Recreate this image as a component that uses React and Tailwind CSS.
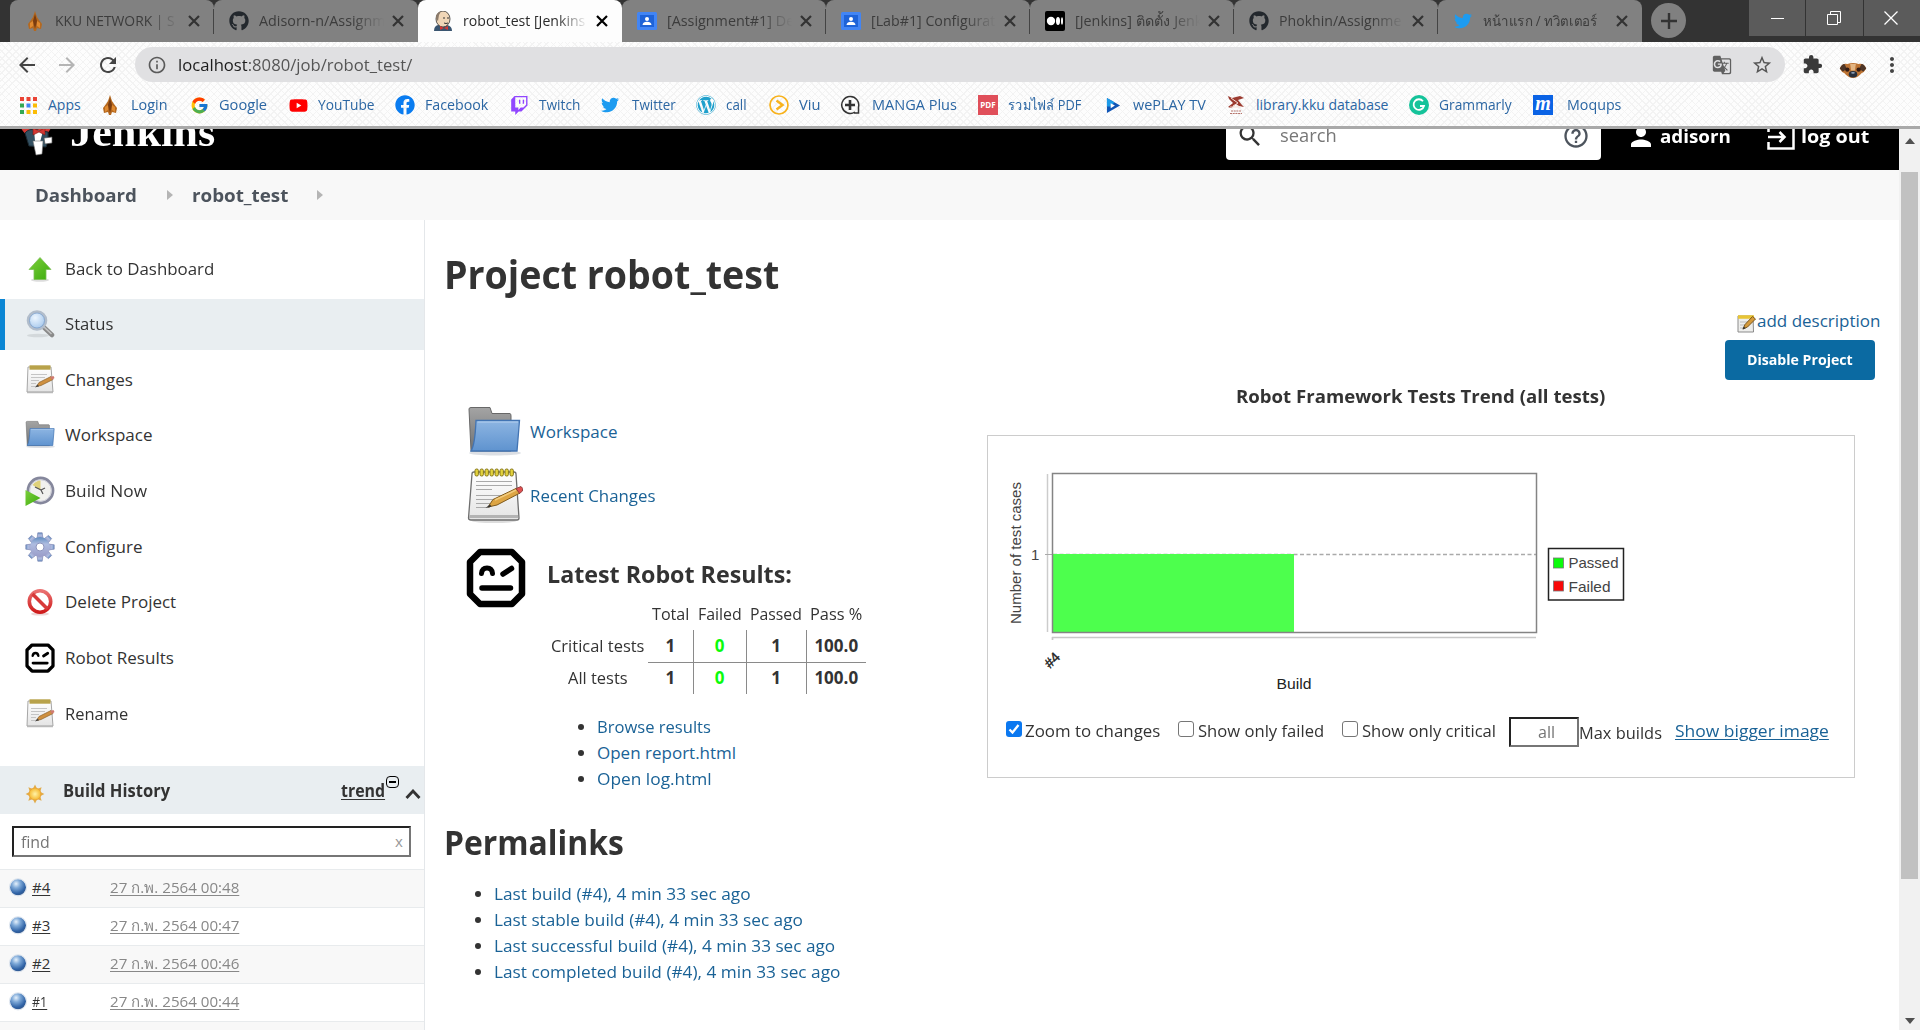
import { useLayoutEffect, useRef, useState } from 'react';
import { FaGithub, FaTwitter, FaWordpress, FaFacebook, FaYoutube } from 'react-icons/fa';
import { FcGoogle } from 'react-icons/fc';
import { BsTwitch } from 'react-icons/bs';
import {
  MdArrowBack, MdArrowForward, MdRefresh, MdInfoOutline, MdGTranslate, MdStarBorder,
  MdExtension, MdMoreVert, MdPerson, MdSearch, MdHelpOutline,
} from 'react-icons/md';

/* Single line of text condensed or widened to a given width. */
function T({ w, className = '', underline = false, children }) {
  const ref = useRef(null);
  const [scale, setScale] = useState(1);
  useLayoutEffect(() => {
    const natural = ref.current.offsetWidth;
    if (natural) setScale(w / natural);
  }, [w]);
  return (
    <span className={`inline-block shrink-0 whitespace-nowrap ${className}`} style={{ width: w }}>
      <span
        ref={ref}
        className={`inline-block origin-left ${underline ? 'underline decoration-1 underline-offset-2' : ''}`}
        style={{ transform: `scaleX(${scale})` }}
      >
        {children}
      </span>
    </span>
  );
}

/* ---------- icons ---------- */

const Flame = () => (
  <svg viewBox="0 0 20 20" className="size-5">
    <path d="M10 0 L12 6 L14 9 L17 13 L16 18 L12 17 L11 20 H9 L8 17 L4 18 L3 13 L6 9 L8 6Z" fill="#b5691f" />
    <path d="M10 3 L12 10 L10 18 L8 10Z" fill="#7a3c10" />
    <path d="M5 12 L8 10 L8 15 L5 17Z M15 12 L12 10 L12 15 L15 17Z" fill="#e08a30" />
  </svg>
);

const Butler = () => (
  <svg viewBox="0 0 20 20" className="size-5">
    <path d="M1 20 Q1 15 5 14 L14 14 Q19 15 19 20Z" fill="#3a5570" />
    <ellipse cx="10" cy="8" rx="7" ry="8" fill="#f0d6b7" stroke="#333" strokeWidth=".8" />
    <path d="M3 8 Q2 2 8 .5 L6 4 L5 10Z" fill="#8a7a6a" />
    <path d="M10 7h2M14 7h2M11 12q2 1 4 0" stroke="#333" fill="none" />
    <path d="M7 15 L11 17 L15 15 V19 L11 17 L7 19Z" fill="#d33833" />
  </svg>
);

const Classroom = () => (
  <svg viewBox="0 0 20 20" className="size-5">
    <rect y="1" width="20" height="18" rx="1.5" fill="#4285f4" />
    <rect x="3" y="4" width="14" height="12" fill="#1e63d8" />
    <circle cx="10" cy="8" r="2" fill="#fff" />
    <path d="M5.5 14 Q6 10.800 10 10.800 T14.500 14Z" fill="#fff" />
  </svg>
);

const MediumMark = () => (
  <svg viewBox="0 0 20 20" className="size-5">
    <rect width="20" height="20" rx="2" fill="#000" />
    <circle cx="6" cy="10" r="4.200" fill="#fff" />
    <ellipse cx="13" cy="10" rx="2" ry="4" fill="#fff" />
    <ellipse cx="17" cy="10" rx="1" ry="3.800" fill="#fff" />
  </svg>
);

const AppsGrid = () => (
  <svg viewBox="0 0 17 17" className="size-[17px]">
    {['#ea4335', '#ea4335', '#ea4335', '#34a853', '#4285f4', '#fbbc05', '#34a853', '#fbbc05', '#fbbc05'].map((c, i) => (
      <rect key={i} x={(i % 3) * 6.5} y={Math.floor(i / 3) * 6.5} width="4" height="4" fill={c} />
    ))}
  </svg>
);

const Viu = () => (
  <svg viewBox="0 0 20 20" className="size-5" fill="none" stroke="#f8b21c">
    <circle cx="10" cy="10" r="9" strokeWidth="1.700" />
    <path d="M7.500 5.500 L13.500 10 L7.500 14.500" strokeWidth="2.500" />
  </svg>
);

const Manga = () => (
  <svg viewBox="0 0 20 20" className="size-5" fill="none" stroke="#333">
    <path d="M15 17 A8.500 8.500 0 1 1 18.500 12 V18 H14" strokeWidth="1.500" />
    <path d="M10 5v10M5 10h10" strokeWidth="2.600" />
  </svg>
);

const WePlay = () => (
  <svg viewBox="0 0 16 16" className="size-[15px]">
    <path d="M1 0 L15 8 L1 16Z" fill="#1055b5" />
    <path d="M1 0 L9 4.600 L5 9 L1 9Z" fill="#1c9be8" />
    <path d="M5 5.500 L9.500 8 L5 10.800Z" fill="#fff" />
  </svg>
);

const Library = () => (
  <svg viewBox="0 0 18 20" className="h-5 w-[18px]">
    <path d="M1 1 L5 3 L13 1 L17 3 L11 5 L15 10 L17 12 L12 11 L9 9 L4 13 L1 12 L6 8 L2 4Z" fill="#9c3b30" />
    <path d="M4 3 L11 8 L6 11 M3 12 H14" stroke="#f3ddd5" fill="none" />
    <path d="M4 16h10M3 18.500h12" stroke="#b5736a" strokeDasharray="2 .7" />
  </svg>
);

const Grammarly = () => (
  <svg viewBox="0 0 20 20" className="size-5" fill="none" stroke="#fff">
    <circle cx="10" cy="10" r="10" fill="#15c39a" stroke="none" />
    <path d="M14 6.200 A5.300 5.300 0 1 0 15 11 H11" strokeWidth="1.800" />
  </svg>
);

const Dog = () => (
  <svg viewBox="0 0 28 18" className="h-[17px] w-7">
    <path d="M0 7 Q2 1 8 2 Q14 0 20 2 Q26 1 28 7 Q26 11 23 12 Q19 17 14 17 Q9 17 5 12 Q2 11 0 7Z" fill="#bd7434" />
    <path d="M0 7 Q2 2 5 2 L7 6 Q5 10 3 10Z M28 7 Q26 2 23 2 L21 6 Q23 10 25 10Z" fill="#4d3527" />
    <circle cx="8" cy="8" r="2.300" fill="#341c14" />
    <circle cx="20" cy="8" r="2.300" fill="#341c14" />
    <path d="M11 2 H17 L16 9 H12Z" fill="#e3b583" />
    <ellipse cx="14" cy="13" rx="4.500" ry="3.500" fill="#29303c" />
    <ellipse cx="14" cy="11.500" rx="2" ry="1" fill="#8fa4bd" />
  </svg>
);

const JenkinsLogo = () => (
  <svg viewBox="0 0 36 56" className="h-14 w-9 shrink-0">
    <circle cx="17" cy="20" r="16.500" fill="#d33833" />
    <ellipse cx="18" cy="16" rx="10.500" ry="12" fill="#f0d6b7" stroke="#2b2b2b" />
    <path d="M14 23 q4 2 8 -1" stroke="#333" strokeWidth="1.300" fill="none" />
    <path d="M6 32 Q10 27 17 29 L29 31 Q30 40 27 46 L10 45Z" fill="#335061" stroke="#1b2a33" />
    <path d="M15 29 L24 30 L20 45 L16 40Z" fill="#fff" />
    <path d="M14 27 L20 30 L26 27 V34 L20 31 L14 34Z" fill="#d33833" stroke="#7c1512" strokeWidth=".6" />
    <path d="M14 40 L24 40 L23 53 L17 54Z" fill="#fff" stroke="#777" strokeWidth=".6" />
    <path d="M25 37 L33 36 V42 L26 43Z" fill="#fff" stroke="#555" strokeWidth=".7" />
  </svg>
);

const Defs = () => (
  <svg className="absolute size-0">
    <defs>
      <linearGradient id="green" x1="0" y1="0" x2="1" y2="1"><stop stopColor="#7ccf3c" /><stop offset="1" stopColor="#3cab0c" /></linearGradient>
      <linearGradient id="blue" x1="0" y1="0" x2="0" y2="1"><stop stopColor="#8db5e2" /><stop offset="1" stopColor="#5f93cf" /></linearGradient>
      <linearGradient id="grey" x1="0" y1="0" x2="0" y2="1"><stop stopColor="#a4a4a4" /><stop offset="1" stopColor="#6f7173" /></linearGradient>
      <linearGradient id="paper" x1="0" y1="0" x2="0" y2="1"><stop stopColor="#ffffff" /><stop offset="1" stopColor="#e4e4e4" /></linearGradient>
      <linearGradient id="red" x1="0" y1="0" x2="0" y2="1"><stop stopColor="#ea7272" /><stop offset="1" stopColor="#cf1b1b" /></linearGradient>
      <linearGradient id="gear" x1="0" y1="0" x2="0" y2="1"><stop stopColor="#5f8cbf" /><stop offset=".35" stopColor="#aebce0" /><stop offset="1" stopColor="#9a9cc8" /></linearGradient>
      <radialGradient id="orb" cx=".38" cy=".28" r=".75"><stop stopColor="#e4f0fb" /><stop offset=".35" stopColor="#7ea9d8" /><stop offset=".8" stopColor="#2f62a5" /><stop offset="1" stopColor="#31578c" /></radialGradient>
      <radialGradient id="glass" cx=".4" cy=".35" r=".7"><stop stopColor="#edf6ff" /><stop offset="1" stopColor="#9fc3ea" /></radialGradient>
      <radialGradient id="sun"><stop stopColor="#fff3a8" /><stop offset="1" stopColor="#f5b82e" /></radialGradient>
    </defs>
  </svg>
);

const UpArrow = () => (
  <svg viewBox="0 0 30 30" className="size-[30px]">
    <ellipse cx="15" cy="26" rx="9" ry="1.800" fill="#ddd" />
    <path d="M15 3.500 L26 15.500 H21 V25.500 H9 V15.500 H4Z" fill="url(#green)" stroke="#7bbf55" strokeWidth=".8" />
  </svg>
);
const Magnifier = () => (
  <svg viewBox="0 0 30 30" className="size-[30px]">
    <ellipse cx="13" cy="26.500" rx="11" ry="1.800" fill="#d3d8db" />
    <path d="M18.500 18 L27 26" stroke="#8a8a8a" strokeWidth="4.500" strokeLinecap="round" />
    <path d="M18.500 17.500 L26.500 25" stroke="#c4c4c4" strokeWidth="1.600" />
    <circle cx="12" cy="11.500" r="9" fill="url(#glass)" stroke="#b2bdcb" strokeWidth="2.600" />
    <circle cx="12" cy="11.500" r="7.500" fill="none" stroke="#7397c4" strokeWidth=".7" />
  </svg>
);
const NotepadSmall = ({ className = 'size-[30px]' }) => (
  <svg viewBox="0 0 30 30" className={className}>
    <path d="M3 2 H26 L28 27 H2Z" fill="url(#paper)" stroke="#9c9c9c" strokeWidth=".9" />
    <path d="M2 27.500h26" stroke="#b9b9b9" strokeWidth="1.500" />
    <path d="M4.500 2.500H25.500" stroke="#b8a24a" strokeWidth="4.400" />
    <path d="M6 9.500h16M6 12.500h14M6 15.500h8M6 18.500h5M6 21.500h8" stroke="#c4c4c4" strokeWidth="1" />
    <path d="M11.500 21.500 L14 17.500 L26 11.500 L28 14.500 L16 20.500Z" fill="#cf9040" stroke="#8b6028" strokeWidth=".7" />
    <path d="M25 12 L28.500 11 L29.500 13 L27 15Z" fill="#cf7a70" />
    <path d="M10 22.500 L12.500 19.500 L14 21.200Z" fill="#444" />
  </svg>
);
const NotepadTiny = () => (
  <svg viewBox="0 0 19 19" className="mt-1 size-[19px]">
    <path d="M1 2 H16 L16.500 18 H1Z" fill="#eeeeec" stroke="#8b8b8b" />
    <path d="M1 3H17" stroke="#e8c535" strokeWidth="3.500" />
    <path d="M3 8h9M3 11h6M3 14h4" stroke="#bbb" />
    <path d="M6 15 L8 10.500 L15.500 2.500 L18.500 5 L10.500 13Z" fill="#d59a3c" stroke="#6f4d14" strokeWidth=".9" />
    <path d="M5.500 15.500 L6.800 12.500 L8.700 14.300Z" fill="#333" />
  </svg>
);
const Folder = ({ className = 'size-[30px]' }) => (
  <svg viewBox="0 0 54 54" className={className}>
    <ellipse cx="28" cy="48" rx="26" ry="2.500" fill="#dcdfe4" />
    <path d="M2 4 Q2 2.500 4 2.500 H23 L25 8.500 H43 Q44 8.500 44 11 V46 H4Z" fill="url(#grey)" stroke="#686868" />
    <path d="M9 15.500 H52.500 L50 46 H4 Q8 40 9 15.500Z" fill="url(#blue)" stroke="#4274b3" strokeWidth="1.300" />
    <path d="M10.500 17 H51" stroke="#b5d0ef" />
  </svg>
);
const Clock = () => (
  <svg viewBox="0 0 30 30" className="size-[30px]">
    <circle cx="15.500" cy="14.500" r="12.500" fill="#f1f1ee" stroke="#85879c" strokeWidth="2.800" />
    <circle cx="15.500" cy="14.500" r="10.800" fill="none" stroke="#c9cad6" />
    <path d="M15.500 14 L7.500 9 Q11 4.500 15.500 4.500Z" fill="#dfd17a" />
    <path d="M10 11 L16 14 L18 18 M16 14 L20 12" stroke="#555" strokeWidth="1.200" fill="none" />
    <path d="M.5 14 L15.500 22 L.5 30Z" fill="url(#green)" />
  </svg>
);
const Gear = () => (
  <svg viewBox="0 0 30 30" className="size-[30px]">
    <g fill="url(#gear)" stroke="#8088b5" strokeWidth=".7">
      {[0, 45, 90, 135, 180, 225, 270, 315].map((a) => (
        <path key={a} d="M12 7 L12.800 .8 H17.200 L18 7Z" transform={`rotate(${a} 15 15)`} />
      ))}
    </g>
    <circle cx="15" cy="15" r="10" fill="url(#gear)" />
    <circle cx="15" cy="15" r="4" fill="#fff" stroke="#8d94bd" />
  </svg>
);
const NoEntry = () => (
  <svg viewBox="0 0 30 30" className="size-[30px]">
    <ellipse cx="15" cy="27" rx="9" ry="1.600" fill="#ecd6d6" />
    <circle cx="15" cy="14.500" r="10.700" fill="#fff" stroke="url(#red)" strokeWidth="3.600" />
    <path d="M7.500 7 L22.500 22" stroke="#d83a3a" strokeWidth="3.600" />
  </svg>
);
const Robot = ({ className = 'size-[30px]' }) => (
  <svg viewBox="0 0 60 60" className={className} fill="none" stroke="#000" strokeLinecap="round">
    <path d="M14 4 H46 L56 14 V46 L46 56 H14 L4 46 V14Z" strokeWidth="6.500" strokeLinejoin="round" />
    <path d="M15.500 25.500 Q16 20 21 20 Q26 20 26.500 25.500" strokeWidth="5" />
    <path d="M37 26 L45.500 20.500M16 40 H44.500" strokeWidth="5.500" />
  </svg>
);
const Notepad = () => (
  <svg viewBox="0 0 56 56" className="size-14">
    <ellipse cx="27" cy="53" rx="22" ry="2" fill="#ddd" />
    <path d="M5 6 Q5 4 7 4 H47 Q49 4 49 6 L52 50 Q52 52 50 52 H4 Q1.500 52 1.500 50Z" fill="url(#paper)" stroke="#6e6e6e" strokeWidth="1.300" />
    <path d="M2 48.500H51" stroke="#b3b3b3" strokeWidth="3" />
    {[9, 14, 19, 24, 29, 34, 39, 44].map((x) => (
      <rect key={x} x={x - 1} y="1" width="3.400" height="7" rx="1.500" fill="#e3d23c" stroke="#86781b" />
    ))}
    <path d="M9 13.500h36M9 17.500h36M9 21.500h16M9 27.500h30M9 31.500h20M9 35.500h14M9 39.500h14" stroke="#a9a9a9" />
    <path d="M21 39 L26 31.500 L49 20.500 L53 25 L30 37Z" fill="#dda544" stroke="#7f5a1c" />
    <path d="M28 32 L49 22" stroke="#f2cb7c" strokeWidth="1.500" />
    <path d="M49 20.500 L54 18.500 Q56.500 20 55.500 23 L52.500 25.500Z" fill="#e05050" stroke="#7d3434" strokeWidth=".8" />
    <path d="M18.500 40 L23 36.500 L24.500 38.500Z" fill="#333" />
  </svg>
);
const Sun = () => (
  <svg viewBox="0 0 20 20" className="size-5">
    {[0, 45, 90, 135, 180, 225, 270, 315].map((a) => (
      <path key={a} d="M7.800 5 L10 .6 L12.200 5Z" fill="#e0ab4a" transform={`rotate(${a} 10 10)`} />
    ))}
    <circle cx="10" cy="10" r="6" fill="url(#sun)" stroke="#e8a13a" strokeWidth=".8" />
  </svg>
);
const Orb = () => (
  <svg viewBox="0 0 20 20" className="size-5">
    <circle cx="10" cy="10.300" r="8" fill="url(#orb)" />
    <circle cx="10" cy="10.300" r="8.600" fill="none" stroke="#c5d2e2" strokeWidth=".6" />
  </svg>
);

/* ---------- browser chrome ---------- */

const TABS = [
  { icon: <Flame />, text: 'KKU NETWORK | S', w: 120 },
  { icon: <FaGithub className="size-5 text-[#23282d]" />, text: 'Adisorn-n/Assignm', w: 126 },
  { icon: <Butler />, text: 'robot_test [Jenkins', w: 122, active: true },
  { icon: <Classroom />, text: '[Assignment#1] De', w: 127 },
  { icon: <Classroom />, text: '[Lab#1] Configurat', w: 124 },
  { icon: <MediumMark />, text: '[Jenkins] ติดตั้ง Jenk', w: 127 },
  { icon: <FaGithub className="size-5 text-[#23282d]" />, text: 'Phokhin/Assignme', w: 122 },
  { icon: <FaTwitter className="size-[18px] text-[#1d9bf0]" />, text: 'หน้าแรก / ทวิตเตอร์', w: 114, full: true },
];

const Cross = ({ className }) => (
  <svg viewBox="0 0 12 12" className={`size-3 shrink-0 ${className}`} stroke="currentColor" strokeWidth="2.200">
    <path d="M1 1 L11 11 M11 1 L1 11" />
  </svg>
);

function Tab({ tab, divider }) {
  const tone = tab.active
    ? 'bg-[#fdfdfd] text-[#2b2b2b]'
    : 'bg-[#818181] text-[#3c3c3c]';
  return (
    <div className={`flex h-[42px] w-[204px] shrink-0 items-center rounded-t-lg ${tone}`}>
      <div className="ml-[15px] flex w-5 justify-center">{tab.icon}</div>
      <div className={`ml-2.5 w-[130px] text-[14px] ${tab.full ? '' : 'mask-r-from-72% mask-r-to-96%'}`}>
        <T w={tab.w}>{tab.text}</T>
      </div>
      <Cross className={`ml-[3px] ${tab.active ? 'text-black' : 'text-[#333]'}`} />
      <div className={`ml-auto h-[25px] w-px ${divider ? 'bg-[#444]' : ''}`} />
    </div>
  );
}

function TabStrip() {
  return (
    <div className="flex h-[42px] bg-[#333]">
      <div className="flex w-[10px] shrink-0" />
      {TABS.map((t, i) => (
        <Tab key={i} tab={t} divider={i !== 1 && i !== 2 && i !== 7} />
      ))}
      <div className="mt-[3px] ml-[9px] flex size-[35px] shrink-0 items-center justify-center rounded-full bg-[#808080]">
        <svg viewBox="0 0 16 16" className="size-4" stroke="#333" strokeWidth="2.400"><path d="M8 0V16M0 8H16" /></svg>
      </div>
      <div className="ml-auto flex h-9 w-[171px] gap-px">
        <div className="flex w-14 items-center justify-center bg-[#5b5b5b]"><div className="h-px w-[13px] bg-white" /></div>
        <div className="flex w-[57px] items-center justify-center bg-[#5b5b5b] pr-0.5">
          <svg viewBox="0 0 14 14" className="size-3.5" fill="none" stroke="#fff"><path d="M.5 3.500H10.500V13.500H.5Z M3.500 3V.5H13.500V11.500H11" /></svg>
        </div>
        <div className="flex w-14 items-center justify-center bg-[#5b5b5b] pr-0.5">
          <svg viewBox="0 0 14 14" className="size-3.5" stroke="#fff" strokeWidth="1.300"><path d="M.5 .5L13.500 13.500M13.500 .5L.5 13.500" /></svg>
        </div>
      </div>
    </div>
  );
}

function AddressBar() {
  return (
    <div className="flex h-[45px] items-center text-[#444]">
      <div className="flex w-[135px] shrink-0 items-center">
        <MdArrowBack className="ml-[15px] size-6" />
        <MdArrowForward className="ml-4 size-6 text-[#b5b5b5]" />
        <MdRefresh className="ml-[17px] size-6" />
      </div>
      <div className="flex h-[35px] w-[1650px] shrink-0 items-center rounded-full bg-[#e0e0e2]">
        <MdInfoOutline className="ml-3 size-5 text-[#5a5a5a]" />
        <T w={234} className="ml-[11px] text-[17px] text-[#555]"><span className="text-[#1c1c1c]">localhost</span>:8080/job/robot_test/</T>
        <MdGTranslate className="ml-auto size-5 text-[#606060]" />
        <MdStarBorder className="mr-3 ml-[19px] size-[22px] text-[#555]" />
      </div>
      <MdExtension className="ml-[17px] size-[21px] shrink-0 text-[#3a3a3a]" />
      <div className="mt-3 ml-4 w-7 shrink-0"><Dog /></div>
      <MdMoreVert className="ml-[13px] size-6 shrink-0" />
    </div>
  );
}

/* slot: distance from this bookmark's icon box to the next; gap: space between icon box and label */
const BOOKMARKS = [
  { slot: 'w-[82px]', icon: <AppsGrid />, text: 'Apps', w: 33 },
  { slot: 'w-[89px]', icon: <Flame />, text: 'Login', w: 36, gap: 'ml-[11px]' },
  { slot: 'w-[99px]', icon: <FcGoogle className="size-[19px]" />, text: 'Google', w: 48 },
  { slot: 'w-[107px]', icon: <FaYoutube className="size-[19px] text-[#f00]" />, text: 'YouTube', w: 57 },
  { slot: 'w-[114px]', icon: <FaFacebook className="size-5 text-[#0a7cf0]" />, text: 'Facebook', w: 63 },
  { slot: 'w-[91px]', icon: <BsTwitch className="size-[19px] text-[#9146ff]" />, text: 'Twitch', w: 41 },
  { slot: 'w-[96px]', icon: <FaTwitter className="size-[18px] text-[#1d9bf0]" />, text: 'Twitter', w: 44, gap: 'ml-[12px]' },
  { slot: 'w-[73px]', icon: <FaWordpress className="size-5 text-[#1fa0cc]" />, text: 'call', w: 21 },
  { slot: 'w-[71px]', icon: <Viu />, text: 'Viu', w: 21 },
  { slot: 'w-[138px]', icon: <Manga />, text: 'MANGA Plus', w: 85, gap: 'ml-[12px]' },
  {
    slot: 'w-[125px]',
    icon: <span className="flex size-5 items-center justify-center bg-[#e04f5a] text-[8px] font-bold text-white">PDF</span>,
    text: 'รวมไฟล์ PDF', w: 73,
  },
  { slot: 'w-[123px]', icon: <WePlay />, text: 'wePLAY TV', w: 73 },
  { slot: 'w-[183px]', icon: <Library />, text: 'library.kku database', w: 132 },
  { slot: 'w-[124px]', icon: <Grammarly />, text: 'Grammarly', w: 73 },
  {
    slot: 'w-[90px]',
    icon: <span className="flex size-5 items-center justify-center bg-[#0b63e5] pb-1 font-['Liberation_Serif',serif] text-[20px] leading-none font-bold text-white italic">m</span>,
    text: 'Moqups', w: 54, gap: 'ml-[14px]',
  },
];

function BookmarkBar() {
  return (
    <div className="flex h-[41px] items-center border-b-2 border-[#a9a9a9] pb-[3px] pl-[18px] text-[14px] text-[#2b66a3]">
      {BOOKMARKS.map((b) => (
        <div key={b.text} className={`flex shrink-0 items-center ${b.slot}`}>
          <div className="flex w-5 shrink-0 justify-center">{b.icon}</div>
          <T w={b.w} className={b.gap || 'ml-2.5'}>{b.text}</T>
        </div>
      ))}
    </div>
  );
}

/* ---------- page ---------- */

function Header() {
  return (
    <header className="flex h-[41px] shrink-0 items-end overflow-hidden bg-black">
      <div className="-mt-7 flex h-14 items-start self-start pl-[19px]">
        <div><JenkinsLogo /></div>
        <T w={145} className="ml-[15px] font-['Liberation_Serif',serif] text-[40px] leading-[64px] font-bold text-white">Jenkins</T>
      </div>
      <div className="mb-2.5 ml-auto flex h-[50px] w-[375px] items-center rounded-[4px] bg-white pt-[2px] text-[#777]">
        <MdSearch className="ml-2.5 size-7 text-[#333]" />
        <T w={57} className="ml-4 text-[18px]">search</T>
        <MdHelpOutline className="mr-[11px] ml-auto size-7 text-[#4d545d]" />
      </div>
      <div className="mb-[13px] flex h-10 w-[298px] items-center text-[18px] font-bold text-white">
        <MdPerson className="ml-[25px] size-[30px]" />
        <T w={71} className="ml-[4px]">adisorn</T>
        <svg viewBox="0 0 28 26" className="ml-[36px] h-[26px] w-7" fill="none" stroke="#fff" strokeWidth="2.500">
          <path d="M1.500 8V1.500H26.500V24.500H1.500V18M1 13H17M12.500 8L17.500 13L12.500 18" />
        </svg>
        <T w={68} className="ml-[6px]">log out</T>
      </div>
    </header>
  );
}

const Chevron = () => (
  <svg viewBox="0 0 6 10" className="h-2.5 w-1.5 -translate-y-px"><path d="M0 0L6 5L0 10Z" fill="#b5b5b5" /></svg>
);

function Breadcrumbs() {
  return (
    <nav className="flex h-[50px] shrink-0 items-center bg-[#f8f8f8] pt-[2px] pl-[35px] text-[18px] font-bold text-[#4d545d]">
      <T w={102} className="mr-[30px]">Dashboard</T>
      <Chevron />
      <T w={96} className="mr-[29px] ml-[19px]">robot_test</T>
      <Chevron />
    </nav>
  );
}

const TASKS = [
  { icon: <UpArrow />, text: 'Back to Dashboard', w: 149 },
  { icon: <Magnifier />, text: 'Status', w: 48, active: true },
  { icon: <NotepadSmall />, text: 'Changes', w: 68 },
  { icon: <Folder />, text: 'Workspace', w: 87 },
  { icon: <Clock />, text: 'Build Now', w: 82 },
  { icon: <Gear />, text: 'Configure', w: 78 },
  { icon: <NoEntry />, text: 'Delete Project', w: 111 },
  { icon: <Robot />, text: 'Robot Results', w: 109 },
  { icon: <NotepadSmall />, text: 'Rename', w: 63 },
];

const BUILDS = [
  ['#4', '27 ก.พ. 2564 00:48'],
  ['#3', '27 ก.พ. 2564 00:47'],
  ['#2', '27 ก.พ. 2564 00:46'],
  ['#1', '27 ก.พ. 2564 00:44'],
];

function Sidebar() {
  return (
    <aside className="flex w-[425px] shrink-0 flex-col border-r border-[#e4e7ea] pt-[23px]">
      <div className="flex h-[496px] flex-col justify-between">
        {TASKS.map((t) => (
          <div
            key={t.text}
            className={`flex h-[51px] items-center border-l-[5px] pl-5 ${t.active ? 'border-[#0b86d4] bg-[#e9eef1]' : 'border-transparent'}`}
          >
            {t.icon}
            <T w={t.w} className="ml-2.5 text-[17px] font-medium">{t.text}</T>
          </div>
        ))}
      </div>
      <div className="mt-[27px] flex h-12 shrink-0 items-center bg-[#e9eef1] pt-px font-bold">
        <div className="mt-1.5 ml-[25px]"><Sun /></div>
        <T w={107} className="ml-[18px] text-[17px]">Build History</T>
        <T w={44} underline className="ml-[171px] text-[17px]">trend</T>
        <div className="mb-[18px] ml-px flex h-3 w-[13px] items-center justify-center rounded-sm border-[1.500px] border-black">
          <div className="h-0.5 w-[7px] bg-black" />
        </div>
        <svg viewBox="0 0 16 10" className="mt-1.5 ml-[6px] h-2.5 w-4" fill="none" stroke="#333" strokeWidth="2.800"><path d="M1.500 9L8 2L14.500 9" /></svg>
      </div>
      <div className="mt-3 ml-3 flex h-[31px] w-[399px] shrink-0 items-center justify-between border-2 border-t-[#222] border-r-[#767676] border-b-[#767676] border-l-[#222] pr-[6px] pl-[7px] text-[#757575]">
        <T w={29} className="text-[17px]">find</T>
        <T w={8} className="text-[15px] text-[#999]">x</T>
      </div>
      <div className="mt-3">
        {BUILDS.map(([n, date]) => (
          <div key={n} className="flex h-[38px] items-center border-t border-[#e8ebed] pb-[3px] pl-2 text-[15px] odd:bg-[#f8f8f8]">
            <Orb />
            <T w={n === '#1' ? 15 : 18} underline className="ml-1">{n}</T>
            <span className={n === '#1' ? 'w-[63px]' : 'w-[60px]'} />
            <T w={129} underline className="text-[#888]">{date}</T>
          </div>
        ))}
        <div className="h-[9px] border-t border-[#e8ebed] bg-[#f8f8f8]" />
      </div>
    </aside>
  );
}

const LINK = 'font-medium text-[#1a6296]';

function Bullets({ items }) {
  return items.map(([text, w]) => (
    <li key={text} className="flex h-[26px] items-center">
      <span className="mr-[13px] size-1.5 rounded-full bg-[#333]" />
      <T w={w} className={LINK}>{text}</T>
    </li>
  ));
}

function Results() {
  const cell = 'border-[#8a8a8a] text-center align-middle';
  return (
    <div className="flex">
      <div className="mt-[1px] ml-[41px]"><Robot className="size-[60px]" /></div>
      <div className="ml-[21px] pt-[7px]">
        <T w={245} className="text-[24px] leading-10 font-bold">Latest Robot Results:</T>
        <table className="mt-[4px] table-fixed border-collapse text-[17px]">
          <colgroup>
            <col className="w-[101px]" /><col className="w-[45px]" /><col className="w-[53px]" /><col className="w-[60px]" /><col className="w-[60px]" />
          </colgroup>
          <tbody>
            <tr className="h-8">
              <td />
              <td className={cell}><T w={37}>Total</T></td>
              <td className={cell}><T w={44}>Failed</T></td>
              <td className={cell}><T w={52}>Passed</T></td>
              <td className={cell}><T w={52}>Pass %</T></td>
            </tr>
            {[['Critical tests', 93], ['All tests', 60]].map(([name, w], i) => {
              const line = i === 0 ? 'border-b' : '';
              return (
                <tr key={name} className="h-8">
                  <td className="text-center"><T w={w}>{name}</T></td>
                  <td className={`${cell} ${line} border-r font-bold`}>1</td>
                  <td className={`${cell} ${line} border-r font-bold text-[#0bfb0b]`}>0</td>
                  <td className={`${cell} ${line} border-r font-bold`}>1</td>
                  <td className={`${cell} ${line} font-bold`}><T w={44}>100.0</T></td>
                </tr>
              );
            })}
          </tbody>
        </table>
        <ul className="mt-5 pl-[31px] text-[17px]">
          <Bullets items={[['Browse results', 114], ['Open report.html', 139], ['Open log.html', 115]]} />
        </ul>
      </div>
    </div>
  );
}

function TrendChart() {
  return (
    <svg viewBox="0 0 620 250" className="h-[250px] w-[620px] font-['Liberation_Sans',sans-serif] text-[15px]" fill="#444">
      <path d="M41.500 18V176" stroke="#ccc" strokeWidth="1.500" />
      <path d="M39 98.500H46" stroke="#aaa" />
      <path d="M47 98.500H530" stroke="#aaa" strokeDasharray="4 2.500" strokeWidth="1.300" />
      <rect x="47" y="98" width="241" height="78" fill="#4dff4d" />
      <rect x="46.500" y="17.500" width="484" height="159" fill="none" stroke="#848484" strokeWidth="1.500" />
      <path d="M46 181.500H530M46.500 181V184" stroke="#c8c8c8" strokeWidth="1.700" fill="none" />
      <text transform="translate(14.500 97) rotate(-90)" textAnchor="middle" textLength="142" lengthAdjust="spacingAndGlyphs">Number of test cases</text>
      <text x="25" y="104">1</text>
      <text transform="translate(46 211) rotate(-45)" fill="#222" x="-3" y="0" fontSize="14" strokeWidth=".4" stroke="#222">#4</text>
      <text x="288" y="233" textAnchor="middle" fill="#222" textLength="35" lengthAdjust="spacingAndGlyphs">Build</text>
      <rect x="542.500" y="92.500" width="75" height="51.500" fill="#fff" stroke="#222" strokeWidth="1.500" />
      <rect x="547.500" y="102" width="10" height="10" fill="#0bfb0b" stroke="#777" strokeWidth=".8" />
      <rect x="547.500" y="125" width="10" height="10" fill="#f80808" stroke="#777" strokeWidth=".8" />
      <text x="562.500" y="112" textLength="50" lengthAdjust="spacingAndGlyphs">Passed</text>
      <text x="562.500" y="136" textLength="42" lengthAdjust="spacingAndGlyphs">Failed</text>
    </svg>
  );
}

const Check = ({ on }) =>
  on ? (
    <span className="-mt-[5px] flex size-4 items-center justify-center rounded-[3px] bg-[#0b78f0]">
      <svg viewBox="0 0 12 12" className="size-3" fill="none" stroke="#fff" strokeWidth="2.300"><path d="M1.500 6.500L4.500 9.500L10.500 2" /></svg>
    </span>
  ) : (
    <span className="-mt-[5px] size-4 rounded-[3px] border border-[#767676] bg-white" />
  );

function TrendPanel() {
  return (
    <section className="ml-auto flex w-[933px] shrink-0 flex-col pt-[6px]">
      <div className="mr-[18px] flex h-[30px] items-center self-end text-[17px]">
        <NotepadTiny />
        <T w={124} className={`ml-px ${LINK}`}>add description</T>
      </div>
      <div className="mt-1 mr-6 flex h-10 w-[150px] items-center justify-center self-end rounded-[4px] bg-[#0b6aa2] text-[14px] font-bold text-white">
        <T w={106}>Disable Project</T>
      </div>
      <div className="mt-1 ml-[270px] text-[18px] leading-6 font-bold"><T w={369}>Robot Framework Tests Trend (all tests)</T></div>
      <div className="mt-[27px] ml-[21px] h-[343px] w-[868px] border border-[#ccc] pt-5">
        <div className="ml-[18px]"><TrendChart /></div>
        <div className="mt-[9px] ml-[18px] flex h-[32px] items-center text-[17px]">
          <Check on />
          <T w={135} className="ml-[3px]">Zoom to changes</T>
          <span className="w-[18px]" />
          <Check />
          <T w={126} className="ml-1">Show only failed</T>
          <span className="w-[18px]" />
          <Check />
          <T w={134} className="ml-1">Show only critical</T>
          <span className="mt-[2px] ml-[13px] flex h-[30px] w-[70px] items-center border-2 border-t-[#222] border-r-[#767676] border-b-[#767676] border-l-[#222] pl-[27px] text-[#757575]">
            <T w={17}>all</T>
          </span>
          <T w={83} className="mt-[3px]">Max builds</T>
          <T w={154} underline className={`ml-[13px] ${LINK}`}>Show bigger image</T>
        </div>
      </div>
    </section>
  );
}

function Main() {
  return (
    <main className="flex min-w-0 flex-1 flex-col pt-7">
      <h1 className="pl-[19px] text-[40px] leading-[52px] font-bold"><T w={335}>Project robot_test</T></h1>
      <div className="flex">
        <div className="pt-[100px]">
          <div className="flex h-[64px] items-center pl-[42px] text-[17px]">
            <Folder className="size-[54px]" />
            <T w={87} className={`ml-[9px] ${LINK}`}>Workspace</T>
          </div>
          <div className="flex h-[64px] items-center pl-[42px] text-[17px]">
            <Notepad />
            <T w={126} className={`ml-[7px] ${LINK}`}>Recent Changes</T>
          </div>
          <div className="mt-[19px]"><Results /></div>
        </div>
        <div className="ml-auto"><TrendPanel /></div>
      </div>
      <h2 className="mt-[26px] pl-[19px] text-[34px] leading-[48px] font-bold"><T w={180}>Permalinks</T></h2>
      <ul className="mt-[15px] pl-[50px] text-[17px]">
        <Bullets
          items={[
            ['Last build (#4), 4 min 33 sec ago', 257],
            ['Last stable build (#4), 4 min 33 sec ago', 309],
            ['Last successful build (#4), 4 min 33 sec ago', 341],
            ['Last completed build (#4), 4 min 33 sec ago', 346],
          ]}
        />
      </ul>
    </main>
  );
}

function Scrollbar() {
  return (
    <div className="flex w-[21px] shrink-0 flex-col items-center justify-between bg-[#f1f1f1] pt-[9px] pb-[6px]">
      <svg viewBox="0 0 10 6" className="h-1.5 w-2.5"><path d="M0 6L5 0L10 6Z" fill="#505050" /></svg>
      <div className="mt-[28px] mb-auto h-[707px] w-[17px] bg-[#c1c1c1]" />
      <svg viewBox="0 0 10 6" className="h-1.5 w-2.5"><path d="M0 0L5 6L10 0Z" fill="#505050" /></svg>
    </div>
  );
}

export default function App() {
  return (
    <div className="flex h-[1030px] w-[1920px] flex-col overflow-hidden bg-white font-['Open_Sans','Noto_Sans',sans-serif] leading-[1.4] text-[#333]">
      <Defs />
      <TabStrip />
      <div className="bg-[#fdfdfd] bg-[repeating-linear-gradient(45deg,#f3f3f3_0_1px,transparent_1px_5px),repeating-linear-gradient(-45deg,#f3f3f3_0_1px,transparent_1px_5px)]">
        <AddressBar />
        <BookmarkBar />
      </div>
      <div className="flex min-h-0 flex-1 border-t border-[#a9a9a9]">
        <div className="flex min-w-0 flex-1 flex-col">
          <Header />
          <Breadcrumbs />
          <div className="flex min-h-0 flex-1">
            <Sidebar />
            <Main />
          </div>
        </div>
        <Scrollbar />
      </div>
    </div>
  );
}
